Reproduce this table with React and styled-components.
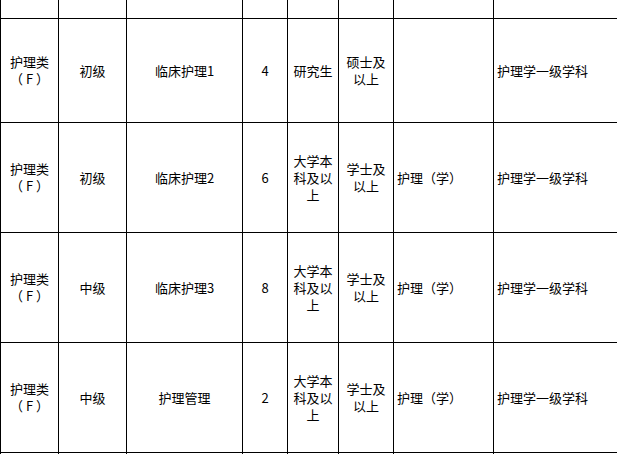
import React from 'react';
import styled, { createGlobalStyle } from 'styled-components';

const GlobalStyle = createGlobalStyle`
  html, body {
    margin: 0;
    padding: 0;
    background: #fff;
  }
  body {
    width: 617px;
    height: 454px;
    overflow: hidden;
    font-family: "Noto Sans CJK SC", "Liberation Sans", sans-serif;
    color: #000;
  }
`;

const Sheet = styled.table`
  border-collapse: collapse;
  table-layout: fixed;
  width: 644px;
  font-size: 13px;
  line-height: 17px;
`;

const Row = styled.tr`
  height: ${(p) => p.$h}px;
`;

const Cell = styled.td`
  border: 1px solid #000;
  border-top: ${(p) => (p.$first ? 'none' : '1px solid #000')};
  padding: 0 4px;
  text-align: ${(p) => p.$align || 'center'};
  vertical-align: middle;
  word-break: break-all;
  ${(p) => p.$align === 'left' && 'padding-left: 3px;'}
`;

// second line of the category cell, brackets kept at full width
const Wrapped = styled.span`
  display: block;
  white-space: nowrap;
  letter-spacing: 3px;
  padding-left: 3px;
`;

const columns = [
  { w: 58 },
  { w: 68 },
  { w: 116 },
  { w: 45 },
  { w: 51 },
  { w: 55 },
  { w: 100, align: 'left' },
  { w: 151, align: 'left' },
];

const category = (
  <>
    护理类<Wrapped>（F）</Wrapped>
  </>
);

const rows = [
  [category, '初级', '临床护理1', '4', '研究生', '硕士及以上', '', '护理学一级学科'],
  [category, '初级', '临床护理2', '6', '大学本科及以上', '学士及以上', '护理（学）', '护理学一级学科'],
  [category, '中级', '临床护理3', '8', '大学本科及以上', '学士及以上', '护理（学）', '护理学一级学科'],
  [category, '中级', '护理管理', '2', '大学本科及以上', '学士及以上', '护理（学）', '护理学一级学科'],
];

const heights = [104, 110, 110, 110];

export default function App() {
  return (
    <>
      <GlobalStyle />
      <Sheet>
        <colgroup>
          {columns.map((c, i) => (
            <col key={i} style={{ width: c.w }} />
          ))}
        </colgroup>
        <tbody>
          <Row $h={18}>
            {columns.map((c, i) => (
              <Cell key={i} $first />
            ))}
          </Row>
          {rows.map((r, ri) => (
            <Row key={ri} $h={heights[ri]}>
              {r.map((text, ci) => (
                <Cell key={ci} $align={columns[ci].align}>
                  {text}
                </Cell>
              ))}
            </Row>
          ))}
          <Row $h={20}>
            {columns.map((c, i) => (
              <Cell key={i} />
            ))}
          </Row>
        </tbody>
      </Sheet>
    </>
  );
}
